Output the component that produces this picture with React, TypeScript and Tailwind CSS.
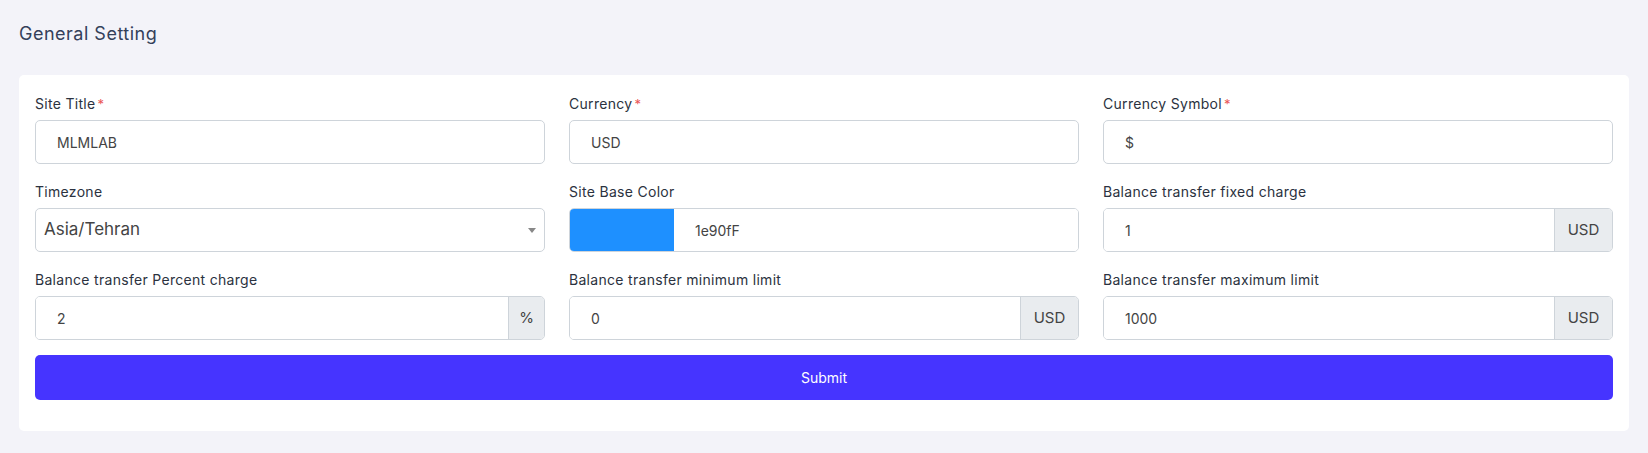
import React from "react";

const font = { fontFamily: "Inter, 'Noto Sans', sans-serif" };

function Label({ text, required }: { text: string; required?: boolean }) {
  return (
    <label className="block h-[20px] text-[14px] leading-[20px] tracking-[0.3px] text-[#2b3240] mb-[6px]">
      {text}
      {required && <span className="text-[#ea5455] ml-[2px] text-[13px]">*</span>}
    </label>
  );
}

function TextField({ value }: { value: string }) {
  return (
    <input
      readOnly
      defaultValue={value}
      className="block w-full h-[44px] border border-[#ced4da] rounded-[5px] px-[21px] text-[14px] text-[#444] bg-white outline-none"
    />
  );
}

function AddonField({ value, addon, addonW }: { value: string; addon: string; addonW: string }) {
  return (
    <div className="flex h-[44px] border border-[#ced4da] rounded-[5px] overflow-hidden bg-white">
      <input
        readOnly
        defaultValue={value}
        className="flex-1 min-w-0 px-[21px] text-[14px] text-[#444] outline-none bg-white"
      />
      <div
        className={`flex items-center justify-center border-l border-[#ced4da] bg-[#e9ecef] text-[15px] text-[#444] ${addonW}`}
      >
        {addon}
      </div>
    </div>
  );
}

export default function App() {
  return (
    <div className="min-h-[453px] bg-[#f3f3f9] px-[19px] pt-[20px]" style={font}>
      <h2 className="text-[18px] leading-[27px] font-normal tracking-[0.5px] text-[#34405a]">General Setting</h2>
      <div className="mt-[28px] bg-white rounded-[5px] px-[16px] pt-[19px] pb-[31px]">
        <div className="grid grid-cols-3 gap-x-[24px] gap-y-[18px]">
          <div>
            <Label text="Site Title" required />
            <TextField value="MLMLAB" />
          </div>
          <div>
            <Label text="Currency" required />
            <TextField value="USD" />
          </div>
          <div>
            <Label text="Currency Symbol" required />
            <TextField value="$" />
          </div>

          <div>
            <Label text="Timezone" />
            <div className="relative flex items-center h-[44px] border border-[#ced4da] rounded-[5px] bg-white pl-[8px]">
              <span className="text-[17px] text-[#444]">Asia/Tehran</span>
              <svg className="absolute right-[8px] top-[19px]" width="8" height="5" viewBox="0 0 8 5">
                <path d="M0 0 L8 0 L4 5 Z" fill="#888" />
              </svg>
            </div>
          </div>
          <div>
            <Label text="Site Base Color" />
            <div className="flex h-[44px] border border-[#ced4da] rounded-[5px] overflow-hidden bg-white">
              <div className="w-[104px] bg-[#1e90ff]" />
              <input
                readOnly
                defaultValue="1e90fF"
                className="flex-1 min-w-0 px-[21px] text-[14px] text-[#444] outline-none bg-white"
              />
            </div>
          </div>
          <div>
            <Label text="Balance transfer fixed charge" />
            <AddonField value="1" addon="USD" addonW="w-[58px]" />
          </div>

          <div>
            <Label text="Balance transfer Percent charge" />
            <AddonField value="2" addon="%" addonW="w-[36px]" />
          </div>
          <div>
            <Label text="Balance transfer minimum limit" />
            <AddonField value="0" addon="USD" addonW="w-[58px]" />
          </div>
          <div>
            <Label text="Balance transfer maximum limit" />
            <AddonField value="1000" addon="USD" addonW="w-[58px]" />
          </div>
        </div>
        <button className="mt-[15px] w-full h-[45px] rounded-[5px] bg-[#4634ff] text-white text-[14px] font-normal">
          Submit
        </button>
      </div>
    </div>
  );
}
